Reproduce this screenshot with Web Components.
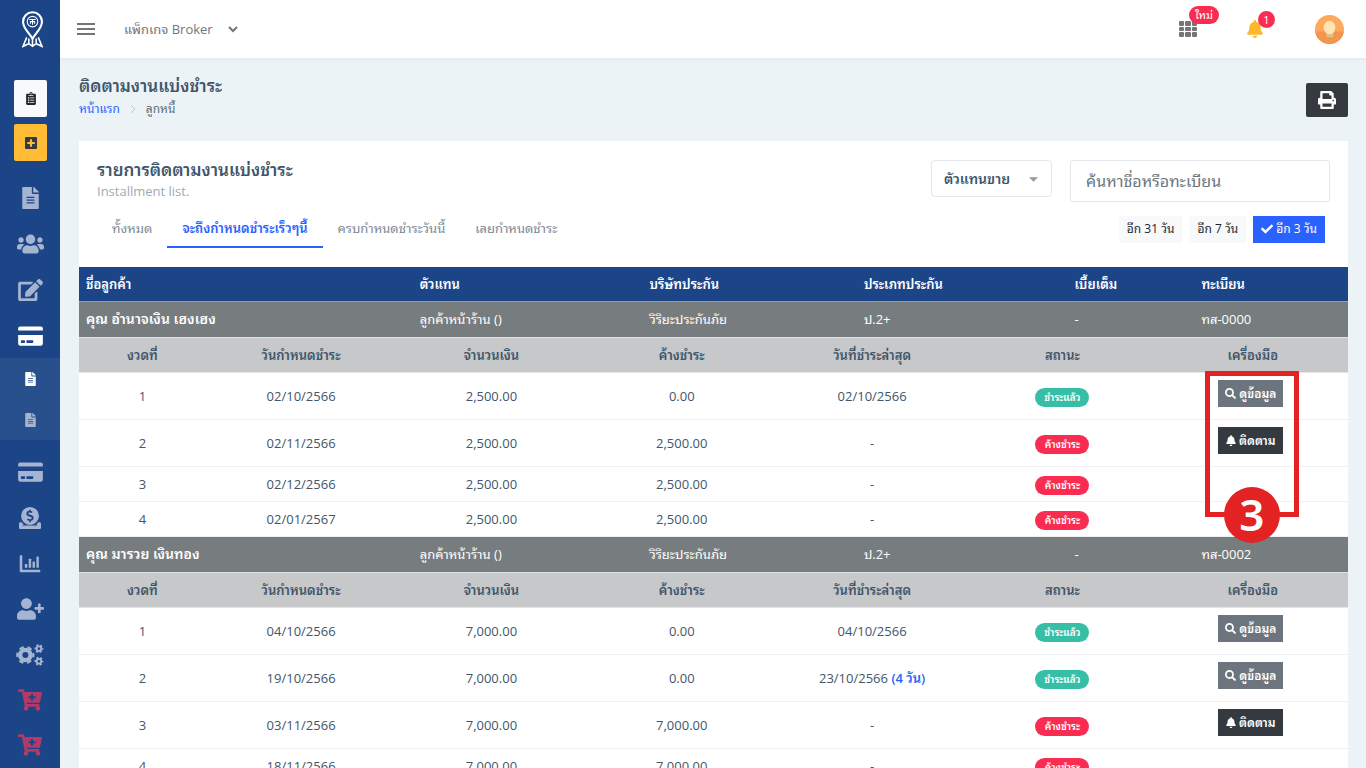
<!DOCTYPE html>
<html lang="th">
<head>
<meta charset="utf-8">
<title>ติดตามงานแบ่งชำระ</title>
<style>
  body { margin: 0; font-family: "Open Sans", "Noto Sans Thai Looped", "Loma", "Garuda", "Waree", "Umpush", "Kinnari", "Norasi", "Noto Serif Thai", "Noto Sans Thai", sans-serif; font-size: 13px; line-height: 20px; color: #3f566b; background: #ecf3f7; }
</style>
</head>
<body>
<app-shell>
  <side-nav slot="nav"></side-nav>
  <top-bar slot="top"></top-bar>
  <page-heading></page-heading>
  <installment-card>
    <installment-table></installment-table>
  </installment-card>
</app-shell>

<script>
const ICONS = {
  file: [384, 512, '<path d="M224 136V0H24C10.700 0 0 10.700 0 24v464c0 13.300 10.700 24 24 24h336c13.300 0 24-10.700 24-24V160H248c-13.200 0-24-10.800-24-24zm64 236c0 6.600-5.400 12-12 12H108c-6.600 0-12-5.400-12-12v-8c0-6.600 5.400-12 12-12h168c6.600 0 12 5.400 12 12v8zm0-64c0 6.600-5.400 12-12 12H108c-6.600 0-12-5.400-12-12v-8c0-6.600 5.400-12 12-12h168c6.600 0 12 5.400 12 12v8zm0-72v8c0 6.600-5.400 12-12 12H108c-6.600 0-12-5.400-12-12v-8c0-6.600 5.400-12 12-12h168c6.600 0 12 5.400 12 12zm96-114.100v6.100H256V0h6.100c6.400 0 12.500 2.500 17 7l97.900 98c4.500 4.500 7 10.600 7 16.900z"/>'],
  users: [640, 512, '<path d="M96 224c35.300 0 64-28.700 64-64s-28.700-64-64-64-64 28.700-64 64 28.700 64 64 64zm448 0c35.300 0 64-28.700 64-64s-28.700-64-64-64-64 28.700-64 64 28.700 64 64 64zm32 32h-64c-17.600 0-33.500 7.100-45.100 18.600 40.300 22.100 68.900 62 75.100 109.400h66c17.700 0 32-14.300 32-32v-32c0-35.300-28.700-64-64-64zm-256 0c61.900 0 112-50.100 112-112S381.900 32 320 32 208 82.100 208 144s50.100 112 112 112zm76.800 32h-8.300c-20.800 10-43.900 16-68.500 16s-47.600-6-68.500-16h-8.300C179.600 288 128 339.600 128 403.200V432c0 26.500 21.500 48 48 48h288c26.500 0 48-21.500 48-48v-28.800c0-63.600-51.600-115.200-115.200-115.200zm-223.700-13.400C161.500 263.100 145.600 256 128 256H64c-35.300 0-64 28.700-64 64v32c0 17.700 14.300 32 32 32h65.900c6.300-47.400 34.900-87.300 75.200-109.400z"/>'],
  edit: [576, 512, '<path d="M402.600 83.200l90.200 90.200c3.800 3.800 3.800 10 0 13.800L274.400 405.600l-92.800 10.300c-12.400 1.400-22.900-9.100-21.500-21.500l10.300-92.800L388.800 83.200c3.800-3.800 10-3.800 13.800 0zm162-22.900l-48.800-48.800c-15.200-15.200-39.900-15.200-55.200 0l-35.400 35.400c-3.800 3.800-3.800 10 0 13.800l90.200 90.200c3.800 3.800 10 3.800 13.800 0l35.400-35.400c15.200-15.300 15.200-40 0-55.200zM384 346.200V448H64V128h229.800c3.200 0 6.200-1.300 8.500-3.500l40-40c7.600-7.600 2.200-20.500-8.500-20.500H48C21.500 64 0 85.500 0 112v352c0 26.500 21.500 48 48 48h352c26.500 0 48-21.500 48-48V306.200c0-10.700-12.900-16-20.500-8.500l-40 40c-2.200 2.300-3.500 5.300-3.500 8.500z"/>'],
  card: [576, 512, '<path d="M0 432c0 26.500 21.500 48 48 48h480c26.500 0 48-21.500 48-48V230H0v202zm192-68c0-6.600 5.400-12 12-12h136c6.600 0 12 5.400 12 12v40c0 6.600-5.400 12-12 12H204c-6.600 0-12-5.400-12-12v-40zm-128 0c0-6.600 5.400-12 12-12h72c6.600 0 12 5.400 12 12v40c0 6.600-5.400 12-12 12H76c-6.600 0-12-5.400-12-12v-40zM576 80v48H0V80c0-26.500 21.500-48 48-48h480c26.500 0 48 21.500 48 48z"/>'],
  donate: [512, 512, '<path fill-rule="evenodd" d="M256 0a208 208 0 1 1 0 416a208 208 0 1 1 0-416zM238 62v28c-38 3-66 29-66 66 0 34 22 52 60 64l36 11c20 6 28 13 28 26 0 17-13 27-36 27-22 0-38-7-54-19l-24 32c18 14 36 22 56 25v32h38v-32c40-5 64-32 64-68 0-35-20-55-60-67l-36-11c-19-6-28-12-28-24 0-15 12-25 32-25 18 0 32 5 46 15l23-32c-13-10-27-16-41-19V62z"/><path fill-rule="evenodd" d="M0 384c0-18 14-32 32-32h32l46 64H80v16h352v-16h-30l46-64h32c18 0 32 14 32 32v96c0 18-14 32-32 32H32c-18 0-32-14-32-32z"/>'],
  chart: [512, 448, '<path d="M0 24Q0 8 16 8h32q16 0 16 16v344h432q16 0 16 16v32q0 16-16 16H32q-32 0-32-32z"/><rect x="128" y="224" width="60" height="96" rx="12"/><rect x="224" y="96" width="60" height="224" rx="12"/><rect x="320" y="160" width="60" height="160" rx="12"/><rect x="416" y="40" width="60" height="280" rx="12"/>'],
  userplus: [640, 512, '<path d="M624 208h-64v-64c0-8.800-7.200-16-16-16h-32c-8.800 0-16 7.200-16 16v64h-64c-8.800 0-16 7.200-16 16v32c0 8.800 7.200 16 16 16h64v64c0 8.800 7.200 16 16 16h32c8.800 0 16-7.200 16-16v-64h64c8.800 0 16-7.200 16-16v-32c0-8.800-7.200-16-16-16zm-400 48c70.700 0 128-57.300 128-128S294.700 0 224 0 96 57.300 96 128s57.300 128 128 128zm89.600 32h-16.700c-22.200 10.200-46.900 16-72.900 16s-50.600-5.800-72.900-16h-16.700C60.200 288 0 348.200 0 422.400V464c0 26.500 21.500 48 48 48h352c26.500 0 48-21.500 48-48v-41.600c0-74.200-60.200-134.400-134.400-134.400z"/>'],
  cogs: [640, 512, '<g fill="none" stroke="currentColor"><circle cx="212" cy="256" r="120" stroke-width="100"/><circle cx="212" cy="256" r="186" stroke-width="52" stroke-dasharray="105 89.779" stroke-dashoffset="52"/><circle cx="528" cy="110" r="54" stroke-width="44"/><circle cx="528" cy="110" r="86" stroke-width="36" stroke-dasharray="50 40.060" stroke-dashoffset="25"/><circle cx="528" cy="402" r="54" stroke-width="44"/><circle cx="528" cy="402" r="86" stroke-width="36" stroke-dasharray="50 40.060" stroke-dashoffset="25"/></g>'],
  cart: [576, 512, '<path d="M504.717 320H211.572l6.545 32h268.418c15.401 0 26.816 14.301 23.403 29.319l-5.517 24.276C523.112 414.668 536 433.828 536 456c0 31.202-25.519 56.444-56.824 55.994-29.823-.429-54.350-24.631-55.155-54.447-.440-16.287 6.085-31.049 16.803-41.548H231.176C241.553 426.165 248 440.326 248 456c0 31.813-26.528 57.431-58.670 55.938-28.540-1.325-51.751-24.385-53.251-52.917-1.158-22.034 10.436-41.455 28.051-51.586L93.883 64H24C10.745 64 0 53.255 0 40V24C0 10.745 10.745 0 24 0h102.529c11.401 0 21.228 8.021 23.513 19.190L159.208 64H551.990c15.401 0 26.816 14.301 23.403 29.319l-47.273 208C525.637 312.246 515.923 320 504.717 320zM408 168h-48v-40c0-8.837-7.163-16-16-16h-16c-8.837 0-16 7.163-16 16v40h-48c-8.837 0-16 7.163-16 16v16c0 8.837 7.163 16 16 16h48v40c0 8.837 7.163 16 16 16h16c8.837 0 16-7.163 16-16v-40h48c8.837 0 16-7.163 16-16v-16c0-8.837-7.163-16-16-16z"/>'],
  clipboard: [384, 512, '<path fill-rule="evenodd" d="M336 64h-80a64 64 0 0 0-128 0H48C21 64 0 85 0 112v352c0 27 21 48 48 48h288c27 0 48-21 48-48V112c0-27-21-48-48-48zM192 40a24 24 0 1 1 0 48a24 24 0 1 1 0-48zM96 128h192v32H96zM72 206h48v48H72zM144 214h176v32H144zM72 294h48v48H72zM144 302h176v32H144zM72 382h48v48H72zM144 390h176v32H144z"/>'],
  plus: [448, 448, '<path fill-rule="evenodd" d="M48 0h352c27 0 48 21 48 48v352c0 27-21 48-48 48H48c-27 0-48-21-48-48V48C0 21 21 0 48 0zM184 84v100H84v80h100v100h80V264h100v-80H264V84z"/>'],
  print: [512, 512, '<path d="M464 192h-16V81.941a24 24 0 0 0-7.029-16.970L383.029 7.029A24 24 0 0 0 366.059 0H88C74.745 0 64 10.745 64 24v168H48c-26.510 0-48 21.490-48 48v132c0 6.627 5.373 12 12 12h52v104c0 13.255 10.745 24 24 24h336c13.255 0 24-10.745 24-24V384h52c6.627 0 12-5.373 12-12V240c0-26.510-21.490-48-48-48zm-80 256H128v-96h256v96zM128 224V64h192v40c0 13.255 10.745 24 24 24h40v96H128zm304 72c-13.254 0-24-10.746-24-24s10.746-24 24-24 24 10.746 24 24-10.746 24-24 24z"/>'],
  bell: [448, 512, '<path d="M224 512c35.320 0 63.970-28.650 63.970-64H160.030c0 35.350 28.650 64 63.970 64zm215.390-149.710c-19.320-20.760-55.470-51.990-55.470-154.290 0-77.700-54.480-139.900-127.940-155.160V32c0-17.670-14.320-32-31.980-32s-31.980 14.330-31.980 32v20.840C118.560 68.100 64.080 130.300 64.080 208c0 102.300-36.150 133.530-55.470 154.290-6 6.450-8.660 14.160-8.610 21.710.110 16.400 12.980 32 32.100 32h383.800c19.120 0 32-15.600 32.100-32 .050-7.550-2.610-15.270-8.610-21.710z"/>'],
  search: [512, 512, '<path d="M505 442.700L405.300 343c-4.500-4.500-10.600-7-17-7H372c27.600-35.300 44-79.700 44-128C416 93.100 322.900 0 208 0S0 93.100 0 208s93.100 208 208 208c48.300 0 92.700-16.400 128-44v16.300c0 6.400 2.500 12.500 7 17l99.700 99.700c9.400 9.400 24.600 9.400 33.900 0l28.300-28.300c9.400-9.400 9.400-24.600.1-34zM208 336c-70.700 0-128-57.200-128-128 0-70.700 57.200-128 128-128 70.700 0 128 57.200 128 128 0 70.700-57.200 128-128 128z"/>'],
  check: [512, 512, '<path d="M173.898 439.404l-166.400-166.400c-9.997-9.997-9.997-26.206 0-36.204l36.203-36.204c9.997-9.998 26.207-9.998 36.204 0L192 312.690 432.095 72.596c9.997-9.997 26.207-9.997 36.204 0l36.203 36.204c9.997 9.997 9.997 26.206 0 36.204l-294.400 294.401c-9.998 9.997-26.207 9.997-36.204-.001z"/>'],
  menu: [18, 12, '<path d="M0 0h18v2H0zM0 5h18v2H0zM0 10h18v2H0z"/>'],
  grid: [18, 16, '<path d="M0 1q0-1 1-1h3q1 0 1 1v3q0 1-1 1H1Q0 5 0 4zM6 1q0-1 1-1h4q1 0 1 1v3q0 1-1 1H7Q6 5 6 4zM13 1q0-1 1-1h3q1 0 1 1v3q0 1-1 1h-3q-1 0-1-1zM0 7q0-1 1-1h3q1 0 1 1v2q0 1-1 1H1q-1 0-1-1zM6 7q0-1 1-1h4q1 0 1 1v2q0 1-1 1H7q-1 0-1-1zM13 7q0-1 1-1h3q1 0 1 1v2q0 1-1 1h-3q-1 0-1-1zM0 12q0-1 1-1h3q1 0 1 1v3q0 1-1 1H1q-1 0-1-1zM6 12q0-1 1-1h4q1 0 1 1v3q0 1-1 1H7q-1 0-1-1zM13 12q0-1 1-1h3q1 0 1 1v3q0 1-1 1h-3q-1 0-1-1z"/>'],
  chevron: [10, 8, '<path d="M1 2l4 4 4-4" fill="none" stroke="currentColor" stroke-width="2"/>'],
  caret: [10, 5, '<path d="M0 0h10L5 5z"/>'],
  crumb: [6, 10, '<path d="M1 1l4 4-4 4" fill="none" stroke="currentColor"/>'],
  logo: [40, 70, '<g fill="none" stroke="currentColor" stroke-width="4"><path d="M20 53C16 43 2 34 2 20a18 18 0 0 1 36 0c0 14-14 23-18 33z"/><circle cx="20" cy="20" r="10" stroke-width="2"/><path d="M14 16h12M15 20h10M20 16v10M16 20v4M24 20v4" stroke-width="2"/><path d="M9 50L2 67l11-5 7 5 7-5 11 5-7-17M13 52v11M27 52v11M20 54v13" stroke-width="3"/></g>'],
  avatar: [30, 30, '<clipPath id="c"><circle cx="15" cy="15" r="15"/></clipPath><g clip-path="url(#c)"><path fill="#ffa95f" d="M0 0h30v30H0z"/><path fill="#f2954d" d="M0 17h30v13H0z"/><path fill="#dfc287" d="M12 17h7v6h-7z"/><ellipse cx="15" cy="13" rx="6" ry="7" fill="#ffe5b5"/></g>']
};

class UiElement extends HTMLElement {
  connectedCallback() {
    if (this.shadowRoot) return;
    this.attachShadow({ mode: 'open' }).innerHTML = this.view();
  }
}

customElements.define('ui-icon', class extends UiElement {
  view() {
    const [w, h, art] = ICONS[this.getAttribute('name')];
    return `<style>:host{display:inline-block;flex:none}svg{display:block;width:100%;height:100%;fill:currentColor}</style>
      <svg viewBox="0 0 ${w} ${h}" aria-hidden="true">${art}</svg>`;
  }
});

customElements.define('app-shell', class extends UiElement {
  view() {
    return `<style>
      :host{display:grid;grid-template-columns:60px minmax(0,1fr);height:100vh}
      .col{display:flex;flex-direction:column;min-width:0;height:100vh}
      main{flex:1;min-height:0;overflow:auto;scrollbar-width:none;padding:15px 18px 0 19px}
    </style>
    <slot name="nav"></slot>
    <div class="col"><slot name="top"></slot><main><slot></slot></main></div>`;
  }
});

customElements.define('side-nav', class extends UiElement {
  view() {
    const link = (name, label, w, h, cls = '') =>
      `<a href="#" class="${cls}" aria-label="${label}"><ui-icon name="${name}" style="width:${w}px;height:${h}px"></ui-icon></a>`;
    return `<style>
      :host{display:block;background:#1c4587;height:100vh;overflow:hidden}
      nav{display:flex;flex-direction:column;align-items:stretch}
      a{display:flex;align-items:center;justify-content:center;height:46px;color:#a5b4d1}
      .logo{height:58px;padding-left:4px;color:#fff;margin-bottom:22px}
      .tile{width:33px;height:37px;border-radius:2px;margin:0 auto 7px 14px;background:#f8f9fa;color:#23272b}
      .yellow{background:#ffbb33;color:#343a40;margin-bottom:14px}
      .active{color:#fff}
      .sub{background:#28508d;margin-bottom:9px}
      .sub a{height:41px}
      .short{height:45px}
      .red{color:#b13b68}
    </style>
    <nav aria-label="เมนูหลัก">
      ${link('logo', 'หน้าแรก', 21, 37, 'logo')}
      ${link('clipboard', 'งาน', 10, 13, 'tile')}
      ${link('plus', 'เพิ่ม', 12, 12, 'tile yellow')}
      ${link('file', 'เอกสาร', 17, 22)}
      ${link('users', 'ลูกค้า', 27, 22)}
      ${link('edit', 'แก้ไข', 25, 22)}
      ${link('card', 'แบ่งชำระ', 25, 22, 'active short')}
      <div class="sub">${link('file', 'ลูกหนี้', 11, 14, 'active')}${link('file', 'เจ้าหนี้', 11, 14)}</div>
      ${link('card', 'ชำระเงิน', 25, 22)}
      ${link('donate', 'การเงิน', 22, 22)}
      ${link('chart', 'รายงาน', 22, 18, 'short')}
      ${link('userplus', 'เพิ่มผู้ใช้', 27, 22)}
      ${link('cogs', 'ตั้งค่า', 28, 22, 'short')}
      ${link('cart', 'สั่งซื้อ', 24, 22, 'red short')}
      ${link('cart', 'สั่งซื้อเพิ่ม', 24, 22, 'red short')}
    </nav>`;
  }
});

customElements.define('top-bar', class extends UiElement {
  view() {
    return `<style>
      :host{display:block;background:#fff;box-shadow:0 1px 4px #dfe6ee;clip-path:inset(0 0 -6px 0);position:relative}
      header{display:flex;align-items:center;height:58px;padding:0 22px 0 17px}
      button{position:relative;display:flex;align-items:center;border:0;background:none;padding:0;font:inherit;color:#757575;line-height:20px}
      .pack{margin-left:29px;gap:15px;font-size:13px}
      .right{margin-left:auto;display:flex;align-items:center}
      .badge{position:absolute;background:#fa2c52;color:#fff;border-radius:9px;height:17px;line-height:17px;text-align:center;font-size:11px}
      .new{left:10px;top:-15px;width:30px;height:18px;line-height:18px}
      .one{left:11px;top:-9px;width:17px}
      .bell{color:#ffb72e;margin:0 52px 0 50px}
    </style>
    <header>
      <button aria-label="เมนู"><ui-icon name="menu" style="width:18px;height:12px"></ui-icon></button>
      <button class="pack">แพ็กเกจ Broker <ui-icon name="chevron" style="width:10px;height:8px"></ui-icon></button>
      <div class="right">
        <button aria-label="แอป"><ui-icon name="grid" style="width:18px;height:16px"></ui-icon><span class="badge new">ใหม่</span></button>
        <button class="bell" aria-label="แจ้งเตือน"><ui-icon name="bell" style="width:16px;height:18px"></ui-icon><span class="badge one">1</span></button>
        <button aria-label="บัญชี"><ui-icon name="avatar" style="width:29px;height:29px"></ui-icon></button>
      </div>
    </header>`;
  }
});

customElements.define('page-heading', class extends UiElement {
  view() {
    return `<style>
      :host{display:flex;justify-content:space-between;align-items:flex-start;height:68px}
      h1{margin:0;font-size:17px;line-height:26px;font-weight:600}
      nav{display:flex;align-items:center;gap:10px;font-size:12px;line-height:20px;color:#5d6b78}
      a{color:#2962ff;text-decoration:none}
      nav ui-icon{color:#c2cbd2}
      button{margin-top:10px;width:42px;height:34px;border:0;border-radius:2px;background:#343a40;color:#fff;display:flex;align-items:center;justify-content:center;padding:0}
    </style>
    <div><h1>ติดตามงานแบ่งชำระ</h1>
      <nav><a href="#">หน้าแรก</a><ui-icon name="crumb" style="width:6px;height:10px"></ui-icon><span>ลูกหนี้</span></nav></div>
    <button aria-label="พิมพ์"><ui-icon name="print" style="width:18px;height:18px"></ui-icon></button>`;
  }
});

customElements.define('installment-card', class extends UiElement {
  view() {
    return `<style>
      :host{display:block;background:#fff;min-height:700px}
      .head{display:flex;align-items:flex-start;padding:15px 18px 0}
      h2{margin:3px 0 0;font-size:17px;line-height:22px;font-weight:600}
      p{margin:0;line-height:20px;color:#a1aab2}
      .filters{margin-left:auto;display:flex;align-items:flex-start;gap:18px;padding-top:4px}
      .drop{position:relative}
      select{appearance:none;width:121px;height:37px;border:1px solid #e3e7eb;border-radius:4px;background:#fff;color:#3f566b;font-family:inherit;font-size:14px;font-weight:600;padding:0 12px}
      .drop ui-icon{position:absolute;right:14px;top:17px;color:#999;pointer-events:none}
      input{box-sizing:border-box;width:260px;height:42px;border:1px solid #e3e7eb;border-radius:2px;padding:0 15px;font:inherit;font-size:16px;color:#3f566b}
      input::placeholder{color:#6c757d;opacity:1}
      .bar{display:flex;align-items:center;justify-content:space-between;padding:8px 23px 19px 18px}
      .tabs{display:flex}
      .tabs a{padding:8px 15px;line-height:20px;font-size:13px;color:#7b8894;text-decoration:none;border-bottom:2px solid transparent}
      .tabs a.on{color:#2962ff;border-color:#2962ff;font-weight:600}
      .days{display:flex;gap:7px}
      .days button{height:27px;border:0;background:#f8f9fa;color:#212529;font:inherit;font-size:12px;padding:0 8px;display:flex;align-items:center;gap:3px}
      .days .on{background:#2962ff;color:#fff}
    </style>
    <div class="head">
      <div><h2>รายการติดตามงานแบ่งชำระ</h2><p>Installment list.</p></div>
      <div class="filters">
        <div class="drop"><select aria-label="ตัวแทนขาย"><option>ตัวแทนขาย</option></select><ui-icon name="caret" style="width:9px;height:5px"></ui-icon></div>
        <input type="text" aria-label="ค้นหา" placeholder="ค้นหาชื่อหรือทะเบียน">
      </div>
    </div>
    <div class="bar">
      <nav class="tabs"><a href="#">ทั้งหมด</a><a href="#" class="on">จะถึงกำหนดชำระเร็วๆนี้</a><a href="#">ครบกำหนดชำระวันนี้</a><a href="#">เลยกำหนดชำระ</a></nav>
      <div class="days"><button>อีก 31 วัน</button><button>อีก 7 วัน</button><button class="on"><ui-icon name="check" style="width:12px;height:12px"></ui-icon>อีก 3 วัน</button></div>
    </div>
    <slot></slot>`;
  }
});

customElements.define('status-badge', class extends UiElement {
  view() {
    return `<style>
      :host{display:inline-block;vertical-align:middle;margin-top:2px;background:#fa2c52;color:#fff;border-radius:10px;height:19px;line-height:19px;width:54px;font-size:10px;font-weight:600;text-align:center}
      :host([paid]){background:#36bea6}
    </style><slot></slot>`;
  }
});

customElements.define('row-action', class extends UiElement {
  view() {
    const view = this.getAttribute('kind') === 'view';
    return `<style>
      :host{display:flex;justify-content:center;margin-bottom:5px}
      button{display:flex;align-items:center;justify-content:center;gap:3px;width:65px;height:27px;margin:0 4px 0 0;border:0;padding:0;font-family:inherit;font-size:12px;font-weight:600;line-height:20px;color:#fff;background:${view ? '#6c757d' : '#343a40'}}
    </style>
    <button><ui-icon name="${view ? 'search' : 'bell'}" style="width:${view ? 11 : 10}px;height:11px"></ui-icon>${view ? 'ดูข้อมูล' : 'ติดตาม'}</button>`;
  }
});

customElements.define('step-marker', class extends UiElement {
  view() {
    return `<style>
      :host{position:absolute;z-index:2;top:-2px;left:50%;width:94px;height:146px;margin-left:-48px;box-sizing:border-box;border:5px solid #e32224;pointer-events:none}
      b{position:absolute;left:50%;bottom:-31px;margin-left:-28px;width:56px;height:56px;border-radius:50%;background:#e32224;color:#fff;font:600 44px/54px "Noto Sans",sans-serif;text-align:center}
    </style><b><slot></slot></b>`;
  }
});

const GROUPS = [
  { name: 'คุณ อำนาจเงิน เฮงเฮง', plate: 'ทส-0000', marker: '3', rows: [
    ['1', '02/10/2566', '2,500.00', '0.00', '02/10/2566', true, 'view'],
    ['2', '02/11/2566', '2,500.00', '2,500.00', '-', false, 'follow'],
    ['3', '02/12/2566', '2,500.00', '2,500.00', '-', false, ''],
    ['4', '02/01/2567', '2,500.00', '2,500.00', '-', false, '']] },
  { name: 'คุณ มารวย เงินทอง', plate: 'ทส-0002', rows: [
    ['1', '04/10/2566', '7,000.00', '0.00', '04/10/2566', true, 'view'],
    ['2', '19/10/2566', '7,000.00', '0.00', '23/10/2566 <a href="#">(4 วัน)</a>', true, 'view'],
    ['3', '03/11/2566', '7,000.00', '7,000.00', '-', false, 'follow'],
    ['4', '18/11/2566', '7,000.00', '7,000.00', '-', false, '']] }
];

customElements.define('installment-table', class extends UiElement {
  view() {
    const row = (r, marker) => `<tr class="${r[6] ? 'tall' : ''}">${r.slice(0, 5).map(c => `<td>${c}</td>`).join('')}
      <td><status-badge ${r[5] ? 'paid' : ''}>${r[5] ? 'ชำระแล้ว' : 'ค้างชำระ'}</status-badge></td>
      <td class="tool">${r[6] ? `<row-action kind="${r[6]}"></row-action>` : ''}${marker ? `<step-marker>${marker}</step-marker>` : ''}</td></tr>`;
    const group = g => `<tr class="group"><th scope="row">${g.name}</th><td>ลูกค้าหน้าร้าน ()</td><td>วิริยะประกันภัย</td><td>ป.2+</td><td>-</td><td>${g.plate}</td></tr>
      <tr><td colspan="6" class="nest"><table class="inner">
        <colgroup><col style="width:10%"><col span="6" style="width:15%"></colgroup>
        <thead><tr>${['งวดที่', 'วันกำหนดชำระ', 'จำนวนเงิน', 'ค้างชำระ', 'วันที่ชำระล่าสุด', 'สถานะ', 'เครื่องมือ'].map(t => `<th scope="col">${t}</th>`).join('')}</tr></thead>
        <tbody>${g.rows.map((r, i) => row(r, i === 0 && g.marker)).join('')}</tbody></table></td></tr>`;
    return `<style>
      :host{display:block}
      table{width:100%;border-collapse:separate;border-spacing:0;table-layout:fixed}
      th,td{box-sizing:border-box;padding:0 7px;text-align:left;white-space:nowrap;font-size:13px;line-height:20px}
      .outer>thead th{height:35px;background:#1c4587;color:#fff;font-weight:600;border-bottom:1px solid #8e9db5}
      .group>*{height:36px;padding-bottom:2px;background:#777c7e;color:#fff;border-bottom:1px solid #dee2e6}
      .group th{font-size:14px;font-weight:600}
      .nest{padding:0}
      .inner th{height:35px;background:#c7c8ca;text-align:center;font-weight:600;border-bottom:1px solid #e3e6e9}
      .inner td{height:35px;text-align:center;border-bottom:1px solid #eff1f3;background:#fff}
      .inner .tall td{height:47px}
      .inner .tool{position:relative;overflow:visible}
      a{color:#2962ff;text-decoration:none;font-weight:600}
    </style>
    <table class="outer">
      <colgroup><col style="width:26.300%"><col style="width:18.100%"><col style="width:16.900%"><col style="width:16.600%"><col style="width:10%"><col></colgroup>
      <thead><tr>${['ชื่อลูกค้า', 'ตัวแทน', 'บริษัทประกัน', 'ประเภทประกัน', 'เบี้ยเต็ม', 'ทะเบียน'].map(t => `<th scope="col">${t}</th>`).join('')}</tr></thead>
      <tbody>${GROUPS.map(group).join('')}</tbody>
    </table>`;
  }
});
</script>
</body>
</html>
